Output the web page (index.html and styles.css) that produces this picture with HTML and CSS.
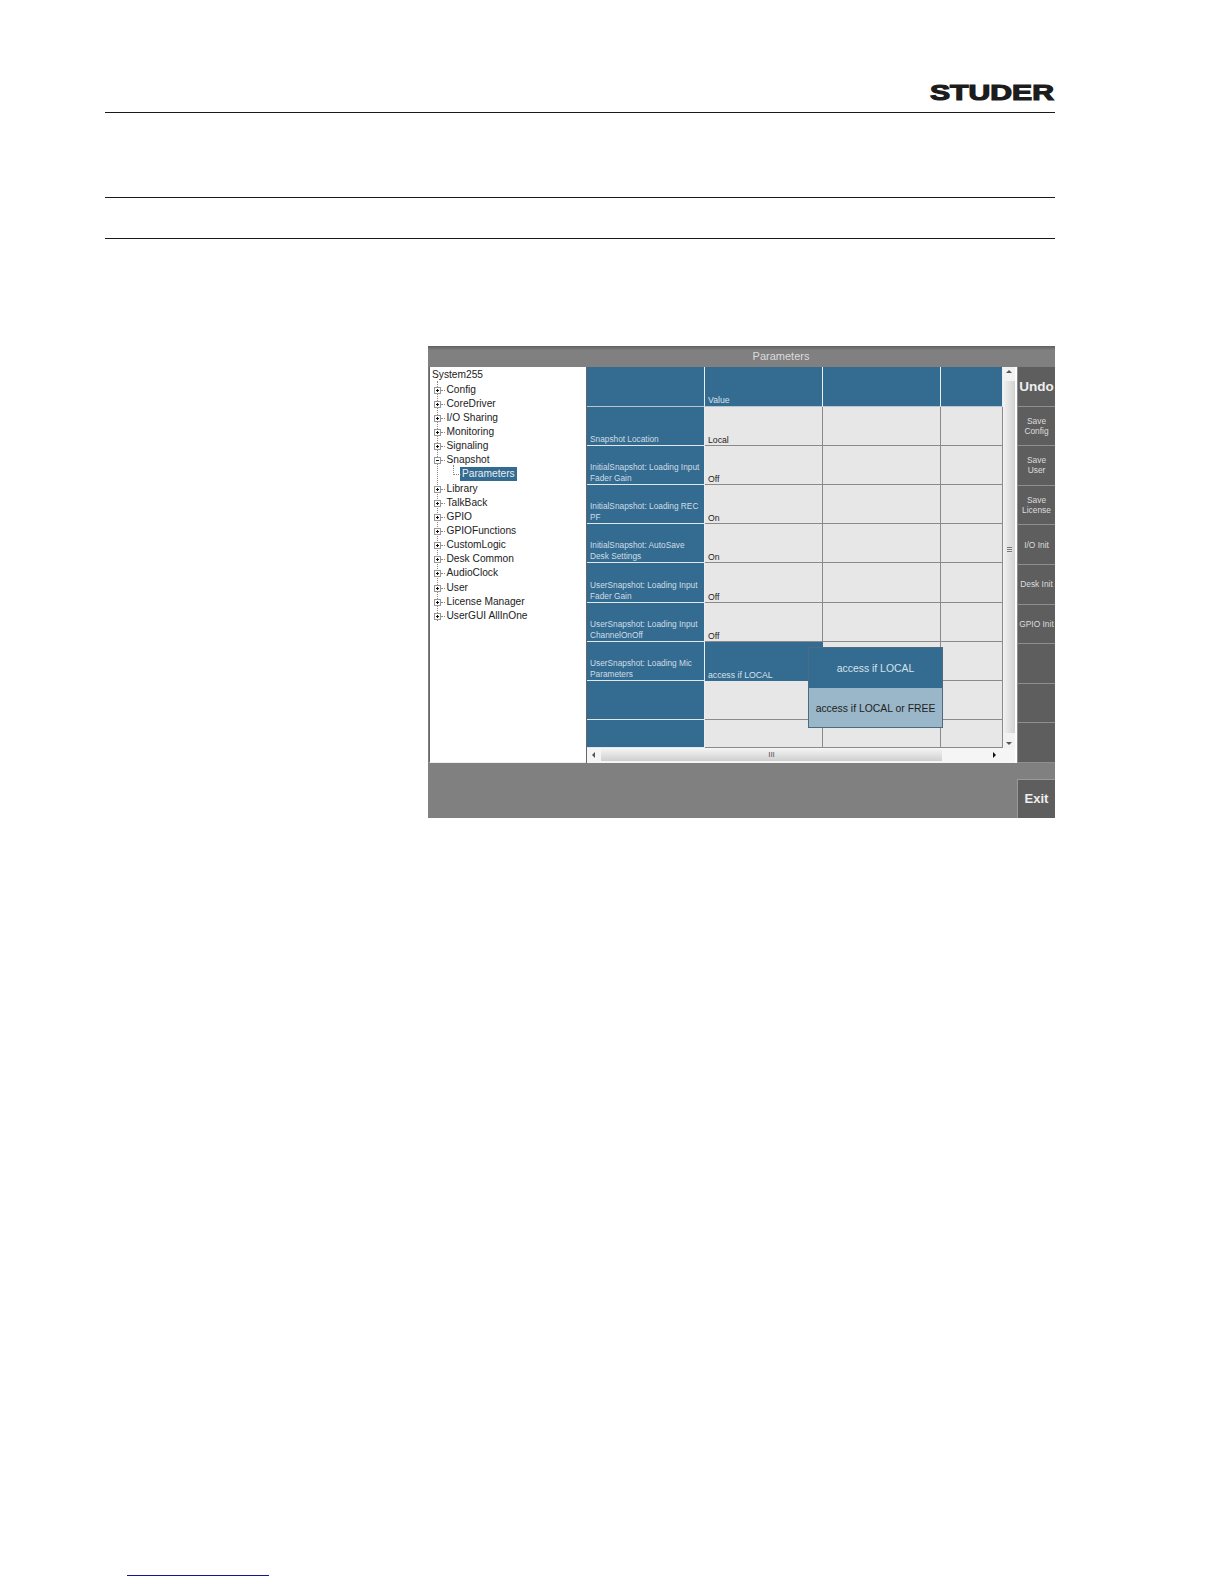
FILE: index.html
```html
<!DOCTYPE html>
<html lang="en">
  <head>
    <meta charset="utf-8" />
    <title>Parameters</title>
    <link rel="stylesheet" href="styles.css">
  </head>
  <body>
    <header class="top">
      <div class="logo">STUDER</div>
    </header>
    <div class="band band-a"></div>
    <div class="band band-b"></div>

    <div class="window">
      <div class="titlebar">Parameters</div>
      <div class="main">
        <ul class="tree">
          <li class="root">System255</li>
          <li class="node"><i class="box plus"></i>Config</li>
          <li class="node"><i class="box plus"></i>CoreDriver</li>
          <li class="node"><i class="box plus"></i>I/O Sharing</li>
          <li class="node"><i class="box plus"></i>Monitoring</li>
          <li class="node"><i class="box plus"></i>Signaling</li>
          <li class="node"><i class="box"></i>Snapshot</li>
          <li class="leaf"><span class="selected">Parameters</span></li>
          <li class="node"><i class="box plus"></i>Library</li>
          <li class="node"><i class="box plus"></i>TalkBack</li>
          <li class="node"><i class="box plus"></i>GPIO</li>
          <li class="node"><i class="box plus"></i>GPIOFunctions</li>
          <li class="node"><i class="box plus"></i>CustomLogic</li>
          <li class="node"><i class="box plus"></i>Desk Common</li>
          <li class="node"><i class="box plus"></i>AudioClock</li>
          <li class="node"><i class="box plus"></i>User</li>
          <li class="node"><i class="box plus"></i>License Manager</li>
          <li class="node"><i class="box plus"></i>UserGUI AllInOne</li>
        </ul>

        <div class="gridwrap">
          <div class="grid">
            <div class="cell head"></div>
            <div class="cell head">Value</div>
            <div class="cell head"></div>
            <div class="cell head"></div>

            <div class="cell name">Snapshot Location</div>
            <div class="cell">Local</div>
            <div class="cell"></div>
            <div class="cell"></div>

            <div class="cell name">InitialSnapshot: Loading Input Fader Gain</div>
            <div class="cell">Off</div>
            <div class="cell"></div>
            <div class="cell"></div>

            <div class="cell name">InitialSnapshot: Loading REC PF</div>
            <div class="cell">On</div>
            <div class="cell"></div>
            <div class="cell"></div>

            <div class="cell name">InitialSnapshot: AutoSave Desk Settings</div>
            <div class="cell">On</div>
            <div class="cell"></div>
            <div class="cell"></div>

            <div class="cell name">UserSnapshot: Loading Input Fader Gain</div>
            <div class="cell">Off</div>
            <div class="cell"></div>
            <div class="cell"></div>

            <div class="cell name">UserSnapshot: Loading Input ChannelOnOff</div>
            <div class="cell">Off</div>
            <div class="cell"></div>
            <div class="cell"></div>

            <div class="cell name">UserSnapshot: Loading Mic Parameters</div>
            <div class="cell active">access if LOCAL</div>
            <div class="cell"></div>
            <div class="cell"></div>

            <div class="cell name"></div>
            <div class="cell"></div>
            <div class="cell"></div>
            <div class="cell"></div>

            <div class="cell name"></div>
            <div class="cell"></div>
            <div class="cell"></div>
            <div class="cell"></div>
          </div>

          <div class="vscroll">
            <span class="arrow up"></span>
            <span class="vtrack"></span>
            <span class="grip"></span>
            <span class="arrow down"></span>
          </div>
          <div class="hscroll">
            <span class="arrow left"></span>
            <span class="htrack">III</span>
            <span class="arrow right"></span>
          </div>

          <div class="popup">
            <div class="option">access if LOCAL</div>
            <div class="option alt">access if LOCAL or FREE</div>
          </div>
        </div>

        <div class="buttons">
          <div class="btn big">Undo</div>
          <div class="btn">Save<br>Config</div>
          <div class="btn">Save<br>User</div>
          <div class="btn">Save<br>License</div>
          <div class="btn">I/O Init</div>
          <div class="btn">Desk Init</div>
          <div class="btn">GPIO Init</div>
          <div class="btn"></div>
          <div class="btn"></div>
          <div class="btn"></div>
        </div>
      </div>
      <div class="bottom">
        <div class="exit">Exit</div>
      </div>
    </div>

    <div class="link"></div>
  </body>
</html>
```

FILE: styles.css
```css
* {
  margin: 0;
  padding: 0;
  box-sizing: border-box;
}

body {
  width: 1224px;
  height: 1584px;
  overflow: hidden;
  background: #fff;
  font-family: "Liberation Sans", sans-serif;
  padding-left: 105px;
}

.top {
  width: 950px;
  height: 113px;
  border-bottom: 1px solid #1a1a1a;
  display: flex;
  justify-content: flex-end;
  align-items: flex-start;
}

.logo {
  margin-top: 80px;
  width: 125px;
  font-size: 22px;
  line-height: 26px;
  font-weight: 700;
  color: #1c1c1c;
  -webkit-text-stroke: 1.2px #1c1c1c;
  white-space: nowrap;
  transform: scaleX(1.37);
  transform-origin: left center;
}

.band {
  width: 950px;
  border-bottom: 1px solid #1a1a1a;
}

.band-a {
  height: 85px;
}

.band-b {
  height: 41px;
}

.window {
  margin-top: 107px;
  margin-left: 323px;
  width: 627px;
  height: 472px;
  background: #808080;
  display: flex;
  flex-direction: column;
}

.titlebar {
  height: 21px;
  padding-left: 79px;
  text-align: center;
  font-size: 11px;
  line-height: 20px;
  color: #dcdcdc;
  background: linear-gradient(#606060, #808080 20%);
}

.main {
  height: 396px;
  display: flex;
}

.tree {
  list-style: none;
  flex: none;
  width: 157px;
  margin-left: 1px;
  padding: 1.4px 0 0 2px;
  background: #fff;
  border-left: 1px solid #666;
  border-bottom: 1px solid #eee;
  font-size: 10.2px;
  line-height: 14.15px;
  color: #222;
  position: relative;
}

.tree::before {
  content: "";
  position: absolute;
  left: 7px;
  top: 14px;
  height: 240px;
  border-left: 1px dotted #888;
}

.root {
  height: 14.15px;
}

.node,
.leaf {
  height: 14.15px;
  display: flex;
  align-items: center;
  padding-left: 14.5px;
  position: relative;
}

.box {
  position: absolute;
  left: 2px;
  top: 4px;
  width: 7px;
  height: 7px;
  background: #fff;
  border: 1px solid #999;
}

.box::before {
  content: "";
  position: absolute;
  left: 1px;
  top: 2px;
  width: 3px;
  height: 1px;
  background: #111;
}

.box.plus::after {
  content: "";
  position: absolute;
  left: 2px;
  top: 1px;
  width: 1px;
  height: 3px;
  background: #111;
}

.node::after {
  content: "";
  position: absolute;
  left: 9px;
  top: 7px;
  width: 4px;
  border-top: 1px dotted #888;
}

.leaf {
  padding-left: 28px;
  color: #e8eef2;
}

.leaf::before {
  content: "";
  position: absolute;
  left: 21px;
  top: -2px;
  width: 7px;
  height: 9px;
  border-left: 1px dotted #888;
  border-bottom: 1px dotted #888;
}

.selected {
  display: block;
  background: #336b91;
  padding: 0 2px;
  line-height: 14px;
}

.gridwrap {
  position: relative;
  flex: none;
  width: 431px;
  background: #f2f2f2;
  border-left: 1px solid #666;
  border-right: 2px solid #fff;
}

.grid {
  width: 416px;
  height: 381px;
  display: grid;
  grid-template-columns: 118px 118px 118px 62px;
  grid-template-rows: 39.7px repeat(8, 39.2px) 28px;
  overflow: hidden;
  font-size: 8.7px;
  line-height: 9px;
  color: #222;
}

.cell {
  display: flex;
  align-items: flex-end;
  padding: 0 2px 0 3px;
  background: #e7e7e7;
  border-right: 1px solid #8a8a8a;
  border-bottom: 1px solid #8a8a8a;
}

.head {
  background: #336b91;
  color: #d6e2ea;
  line-height: 11px;
  border-right: 1px solid #e8eef2;
  border-bottom: 1px solid #b7c6d0;
}

.name {
  background: #336b91;
  color: #d0dde6;
  font-size: 8.3px;
  line-height: 11px;
  padding-left: 3px;
  padding-right: 1px;
  border-right: 1px solid #e8eef2;
  border-bottom: 1px solid #dfe8ee;
}

.active {
  background: #336b91;
  color: #d6e2ea;
  border-color: #336b91;
}

.vscroll {
  position: absolute;
  right: 0;
  top: 0;
  width: 12px;
  height: 381px;
  background: #f2f2f2;
}

.vtrack {
  position: absolute;
  left: 1px;
  top: 14px;
  width: 11px;
  height: 352px;
  background: linear-gradient(to right, #efefef, #d2d2d2);
}

.grip {
  position: absolute;
  left: 4px;
  top: 180px;
  width: 5px;
  height: 6px;
  background: repeating-linear-gradient(#777 0 1px, #e8e8e8 1px 2px);
}

.hscroll {
  position: absolute;
  left: 0;
  top: 381px;
  width: 428px;
  height: 15px;
  background: #f5f5f5;
}

.htrack {
  position: absolute;
  left: 14px;
  top: 1px;
  width: 341px;
  height: 12px;
  background: linear-gradient(#f3f3f3, #cfcfcf);
  text-align: center;
  font-size: 8px;
  line-height: 12px;
  color: #555;
}

.arrow {
  position: absolute;
  width: 0;
  height: 0;
  border: 3px solid transparent;
}

.arrow.up {
  left: 3px;
  top: 3px;
  border-top: 0;
  border-bottom-color: #555;
}

.arrow.down {
  left: 3px;
  bottom: 3px;
  border-bottom: 0;
  border-top-color: #555;
}

.arrow.left {
  left: 5px;
  top: 4px;
  border-left: 0;
  border-right-color: #555;
}

.arrow.right {
  left: 406px;
  top: 4px;
  border-right: 0;
  border-left-color: #111;
}

.popup {
  position: absolute;
  left: 221px;
  top: 280px;
  width: 135px;
  height: 81px;
  border: 1px solid #4c6a80;
  font-size: 10.4px;
}

.option {
  height: 39.5px;
  line-height: 41px;
  text-align: center;
  background: #336b91;
  color: #d6e2ea;
}

.option.alt {
  background: #9ab7ca;
  color: #222;
}

.buttons {
  flex: 1;
  display: grid;
  grid-template-rows: repeat(10, 1fr);
  background: #5e5e5e;
}

.btn {
  display: flex;
  align-items: center;
  justify-content: center;
  text-align: center;
  font-size: 8.4px;
  line-height: 10px;
  color: #dcdcdc;
  background: #5e5e5e;
  border-left: 1px solid #8a8a8a;
  border-bottom: 1px solid #8f8f8f;
  white-space: nowrap;
}

.btn.big {
  font-size: 13.5px;
  font-weight: 700;
  color: #eee;
  padding-top: 1px;
}

.bottom {
  flex: 1;
  display: flex;
  justify-content: flex-end;
  align-items: flex-end;
}

.exit {
  width: 38px;
  height: 39px;
  background: #5e5e5e;
  border: 1px solid #9a9a9a;
  border-width: 1px 0 0 1px;
  text-align: center;
  font-size: 13px;
  font-weight: 700;
  line-height: 38px;
  color: #eee;
}

.link {
  margin-top: 757px;
  margin-left: 22px;
  width: 142px;
  height: 1px;
  background: #14149c;
}
```
